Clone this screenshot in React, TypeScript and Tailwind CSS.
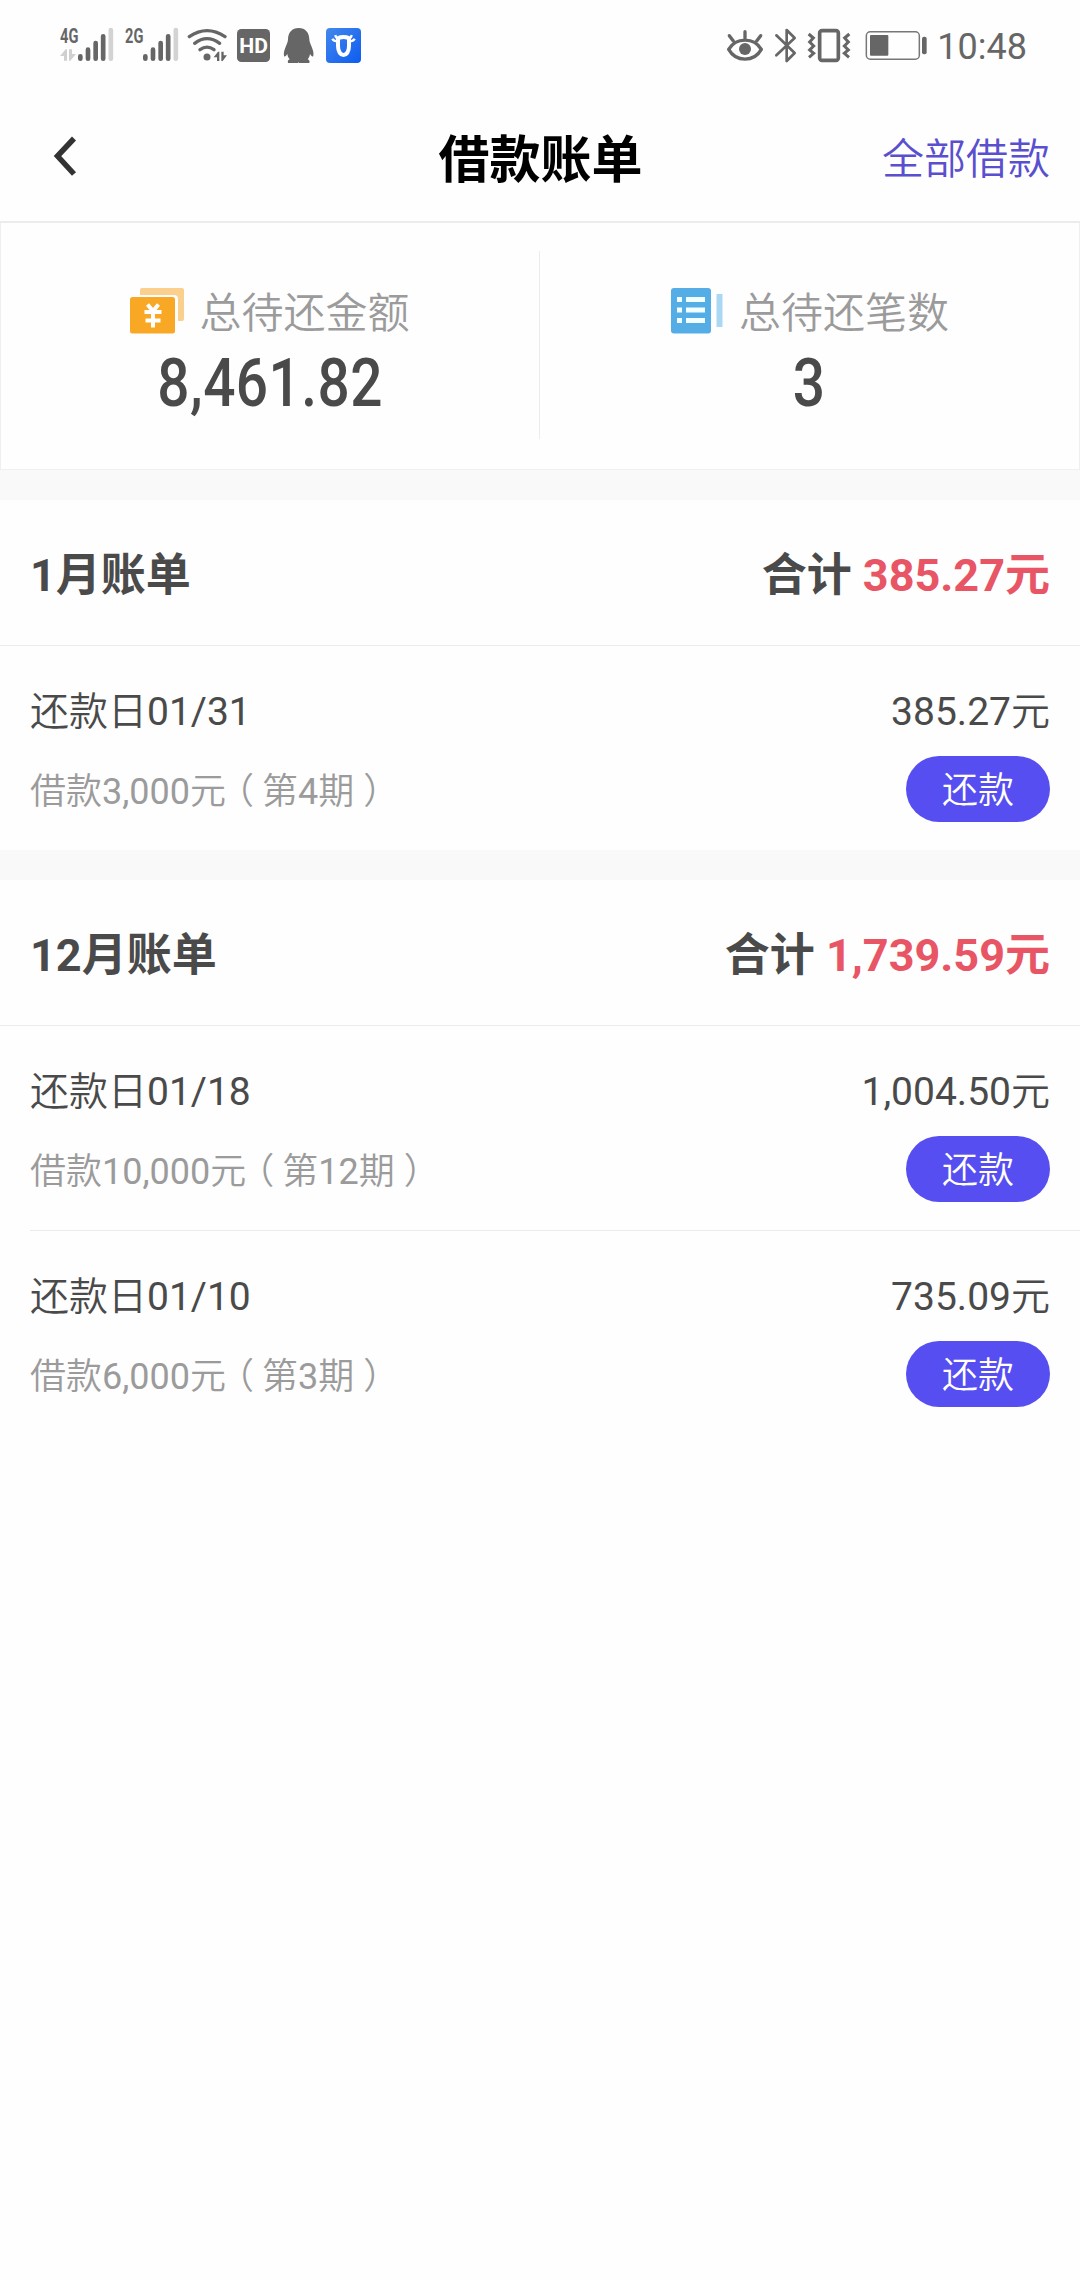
import type { ReactNode } from 'react';

interface Loan {
  id: string;
  date: string;
  amount: string;
  principal: string;
  period: number;
}

interface MonthBill {
  month: string;
  total: string;
  loans: Loan[];
}

const bills: MonthBill[] = [
  {
    month: '1月账单',
    total: '385.27',
    loans: [{ id: 'a', date: '01/31', amount: '385.27', principal: '3,000', period: 4 }],
  },
  {
    month: '12月账单',
    total: '1,739.59',
    loans: [
      { id: 'b', date: '01/18', amount: '1,004.50', principal: '10,000', period: 12 },
      { id: 'c', date: '01/10', amount: '735.09', principal: '6,000', period: 3 },
    ],
  },
];

function SignalIcon({ label, arrows }: { label: string; arrows?: boolean }) {
  return (
    <svg viewBox="57 30 168 132" className="-mt-[7px] h-[44px] w-[56px]" fill="#666">
      <text x="60" y="98" fontSize="60" textLength="55" lengthAdjust="spacingAndGlyphs" className="font-['Roboto'] font-bold">
        {label}
      </text>
      {arrows && (
        <g fill="#d0d0d0">
          <path d="M60 138l17-20h4v34h-9v-14z" />
          <path d="M87 118h9v14h12l-17 20h-4z" />
        </g>
      )}
      <g strokeWidth="14" strokeLinecap="round" stroke="#666">
        <path d="M121 139v7M144 119v27M167 99v47M189.500 79v67" />
        <path d="M212.500 60v86" stroke="#d3d3d3" />
      </g>
    </svg>
  );
}

function WifiIcon() {
  return (
    <svg viewBox="441 51 123 111" className="h-[37px] w-[41px]" fill="#666">
      <g fill="none" stroke="#666" strokeWidth="10" strokeLinecap="round">
        <path d="M448 80Q501 44 555 80" />
        <path d="M464 100Q501 72 539 100" />
        <path d="M480 119Q501 104 522 119" />
      </g>
      <circle cx="501" cy="141" r="10.500" />
      <path d="M521 142l13-17h4v28h-7v-11zM544 125v28h4l13-17h-10v-11z" />
    </svg>
  );
}

function HdIcon() {
  return (
    <svg viewBox="591 51 99 111" className="h-[37px] w-[33px]">
      <rect x="591" y="57" width="99" height="99" rx="13" fill="#666" />
      <text x="598" y="128" fontSize="62" textLength="86" lengthAdjust="spacingAndGlyphs" fill="#fff" className="font-['Roboto'] font-bold">
        HD
      </text>
    </svg>
  );
}

function PenguinIcon() {
  return (
    <svg viewBox="729 51 93 111" className="h-[37px] w-[31px]" fill="#666">
      <path d="M776 54c-20 0-32 14-32 34 0 8-3 12-6 20-4 10-8 20-6 29 1 5 6 2 10-5 1 8 4 12 7 16-4 2-7 5-5 11h30l2-2 2 2h30c2-6-1-9-5-11 3-4 6-8 7-16 4 7 9 10 10 5 2-9-2-19-6-29-3-8-6-12-6-20 0-20-12-34-32-34z" />
    </svg>
  );
}

function BullIcon() {
  return (
    <svg viewBox="858 51 105 111" className="h-[37px] w-[35px]">
      <defs>
        <linearGradient id="bull" x1="0" y1="0" x2="1" y2="1">
          <stop offset="0" stopColor="#4388ec" />
          <stop offset="1" stopColor="#0d5cf0" />
        </linearGradient>
      </defs>
      <rect x="858" y="54" width="105" height="105" rx="12" fill="url(#bull)" />
      <g fill="none" stroke="#fff">
        <path d="M894 88c0-9 33-9 33 0v20c0 36-33 36-33 0z" strokeWidth="12" />
        <path d="M886 75c1 7 6 11 14 12M935 75c-1 7-6 11-14 12" strokeWidth="7" />
        <path d="M877 86c3 6 9 8 17 8M944 86c-3 6-9 8-17 8" strokeWidth="7" />
      </g>
    </svg>
  );
}

function EyeIcon() {
  return (
    <svg viewBox="81 51 108 111" className="h-[37px] w-[36px]">
      <g fill="none" stroke="#666" strokeWidth="10" strokeLinecap="round">
        <path d="M86 118C108 81 162 81 184 118C162 157 108 157 86 118z" strokeLinejoin="round" />
        <path d="M135 65v20M88 77l12 16M182 77l-12 16" />
      </g>
      <circle cx="135" cy="117" r="18" fill="#666" />
    </svg>
  );
}

function BluetoothIcon() {
  return (
    <svg viewBox="222 51 69 111" className="h-[37px] w-[23px]" fill="none" stroke="#666" strokeWidth="8" strokeLinecap="round" strokeLinejoin="round">
      <path d="M229 76l55 53-24 24V60l24 24-55 52" />
    </svg>
  );
}

function VibrateIcon() {
  return (
    <svg viewBox="321 51 132 111" className="h-[37px] w-[44px]" fill="none" stroke="#666">
      <rect x="359" y="62" width="56" height="89" rx="7" strokeWidth="11" />
      <g strokeWidth="9">
        <path d="M326 72l14 12-11 12 12 12-12 12 12 10-14 12" />
        <path d="M448 72l-14 12 11 12-12 12 12 12-12 10 14 12" />
      </g>
    </svg>
  );
}

function BatteryIcon() {
  return (
    <svg viewBox="495 51 189 111" className="h-[37px] w-[63px]" fill="#666">
      <rect x="499" y="65.500" width="159" height="82" rx="12" fill="none" stroke="#777" strokeWidth="4.500" />
      <rect x="510" y="75" width="55" height="62" rx="3" />
      <rect x="666" y="80" width="14" height="53" rx="6" />
    </svg>
  );
}

function MoneyIcon() {
  return (
    <svg viewBox="0 0 54 46" className="h-[46px] w-[54px]">
      <path d="M12 0h40a2 2 0 0 1 2 2v29a2 2 0 0 1-2 2h-4V11a4 4 0 0 0-4-4H10V2a2 2 0 0 1 2-2z" fill="#fbd08f" />
      <rect y="9" width="45" height="36.500" rx="2.500" fill="#f9a825" />
      <path d="M17.500 16.500l5.500 6.500 5.500-6.500M14.500 24h17M15.500 32.500h15M23 22.500v17" fill="none" stroke="#fff" strokeWidth="4" />
    </svg>
  );
}

function ListIcon() {
  return (
    <svg viewBox="0 0 54 46" className="h-[46px] w-[54px]">
      <rect x="1" width="40" height="45.500" rx="3" fill="#55ade6" />
      <path d="M7 11.500h5M7 22h5M7 32.500h5M16 11.500h19M16 22h19M16 32.500h19" stroke="#f2ffff" strokeWidth="5" />
      <rect x="46.500" y="6" width="6" height="33" fill="#aad8f3" />
    </svg>
  );
}

function StatusBar() {
  return (
    <div className="flex h-[93px] items-start justify-between pt-[27px] pr-[53px] pl-[59px]">
      <div className="flex">
        <SignalIcon label="4G" arrows />
        <div className="ml-[9px] flex">
          <SignalIcon label="2G" />
        </div>
        <div className="ml-[7px] flex gap-[9px]">
          <WifiIcon />
          <HdIcon />
        </div>
        <div className="ml-[13px] flex gap-[12px]">
          <PenguinIcon />
          <BullIcon />
        </div>
      </div>
      <div className="flex">
        <EyeIcon />
        <div className="ml-[11px] flex gap-[10px]">
          <BluetoothIcon />
          <VibrateIcon />
        </div>
        <div className="ml-[14px] flex">
          <BatteryIcon />
        </div>
        <span className="ml-[9px] text-[36px] leading-[40px] text-[#666]">10:48</span>
      </div>
    </div>
  );
}

function Header() {
  return (
    <header className="grid h-[130px] grid-cols-3 items-center border-b-2 border-[#ececec] pr-[30px] pl-[53px]">
      <button type="button" aria-label="返回" className="justify-self-start">
        <svg viewBox="0 0 24 42" className="h-[42px] w-[24px]" fill="none" stroke="#333" strokeWidth="5.500">
          <path d="M21 2.500L4.500 20 21 38" />
        </svg>
      </button>
      <h1 className="-ml-[22px] pt-[8px] text-center text-[51px] leading-[60px] font-bold text-black">借款账单</h1>
      <a className="justify-self-end pt-[5px] text-[42px] leading-[60px] font-[350] text-[#5a4fcf]">全部借款</a>
    </header>
  );
}

function SummaryCell({ icon, label, value }: { icon: ReactNode; label: string; value: string }) {
  return (
    <div className="flex flex-col items-center pt-[60px]">
      <div className="flex h-[56px] items-center gap-[15px]">
        {icon}
        <span className="pt-[6px] text-[42px] leading-[56px] font-[350] text-[#9b9b9b]">{label}</span>
      </div>
      <p className="mt-[7px] origin-center scale-x-[0.86] text-[66px] leading-[76px] font-medium tracking-[0.5px] text-[#4a4a4a]">{value}</p>
    </div>
  );
}

// Digits carry a heavier weight than the Chinese text beside them
function Num({ children }: { children: ReactNode }) {
  return <span className="font-normal">{children}</span>;
}

function LoanRow({ loan }: { loan: Loan }) {
  return (
    <div className="ml-[30px] h-[205px] border-b border-[#ebebeb] pt-[35px] pr-[30px] last:h-[204px] last:border-b-0">
      <div className="flex h-[60px] items-center justify-between pt-px text-[39px] leading-[60px] font-[350] text-[#4a4a4a]">
        <span>还款日<Num>{loan.date}</Num></span>
        <span><Num>{loan.amount}</Num>元</span>
      </div>
      <div className="mt-[15px] flex h-[66px] items-center justify-between">
        <span className="pt-[6px] text-[36px] leading-[66px] font-[350] text-[#9b9b9b]">
          借款<Num>{loan.principal}</Num>元
          <span className="mr-[8px] ml-[10px] [font-feature-settings:'halt']">（</span>
          第<Num>{loan.period}</Num>期
          <span className="ml-[9px] [font-feature-settings:'halt']">）</span>
        </span>
        <button type="button" className="h-[66px] w-[144px] rounded-full bg-[#564ef0] pt-[5px] text-[36px] leading-[61px] font-[350] text-white">
          还款
        </button>
      </div>
    </div>
  );
}

export default function App() {
  return (
    <div className="min-h-[2280px] w-[1080px] bg-[#fefefe] font-['Roboto','Noto_Sans_CJK_SC',sans-serif]">
      <StatusBar />
      <Header />

      {/* Totals */}
      <section className="grid h-[247px] grid-cols-[538px_1px_1fr] border-x border-b border-[#efefef]">
        <SummaryCell icon={<MoneyIcon />} label="总待还金额" value="8,461.82" />
        <div className="mt-[28px] h-[188px] bg-[#ececec]" />
        <SummaryCell icon={<ListIcon />} label="总待还笔数" value="3" />
      </section>

      {/* Monthly bills */}
      {bills.map((bill) => (
        <section key={bill.month} className="border-t-[30px] border-[#f9f9f9]">
          <div className="flex h-[146px] items-center justify-between border-b border-[#ebebeb] px-[30px] pt-[7px] text-[45px] font-bold text-[#4a4a4a]">
            <h2>{bill.month}</h2>
            <p>
              合计 <span className="text-[#e85565]">{bill.total}元</span>
            </p>
          </div>
          <div>
            {bill.loans.map((loan) => (
              <LoanRow key={loan.id} loan={loan} />
            ))}
          </div>
        </section>
      ))}
    </div>
  );
}
